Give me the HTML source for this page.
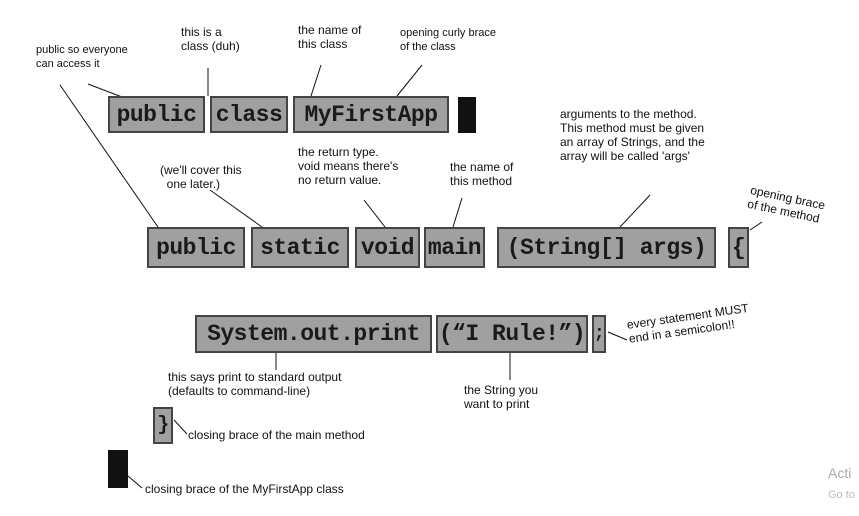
<!DOCTYPE html>
<html><head><meta charset="utf-8"><style>
body{margin:0;width:859px;height:516px;background:#fff;position:relative;overflow:hidden;font-family:"Liberation Sans",sans-serif}
.b{position:absolute;background:#a0a0a0;border:2px solid #444;box-sizing:border-box;font-family:"Liberation Mono",monospace;font-weight:bold;color:#1a1a1a;font-size:23px;letter-spacing:-0.5px;display:flex;align-items:center;justify-content:center;white-space:pre}
.k{position:absolute;background:#111}
.t{position:absolute;font-size:12px;line-height:14px;color:#111;white-space:pre}
svg{position:absolute;left:0;top:0}
</style></head><body>
<svg width="859" height="516" stroke="#111" stroke-width="1" fill="none">
<line x1="60" y1="85" x2="160" y2="230"/>
<line x1="88" y1="84" x2="122" y2="97"/>
<line x1="208" y1="68" x2="208" y2="96"/>
<line x1="321" y1="65" x2="311" y2="96"/>
<line x1="422" y1="65" x2="397" y2="96"/>
<line x1="210" y1="190" x2="262" y2="227"/>
<line x1="364" y1="200" x2="385" y2="227"/>
<line x1="462" y1="198" x2="453" y2="227"/>
<line x1="650" y1="195" x2="620" y2="227"/>
<line x1="762" y1="222" x2="750" y2="230"/>
<line x1="608" y1="332" x2="627" y2="340"/>
<line x1="276" y1="353" x2="276" y2="370"/>
<line x1="510" y1="353" x2="510" y2="380"/>
<line x1="174" y1="420" x2="187" y2="434"/>
<line x1="128" y1="476" x2="142" y2="488"/>
</svg>
<div class="t" style="left:36px;top:43px;font-size:11px">public so everyone
can access it</div>
<div class="t" style="left:181px;top:25px">this is a
class (duh)</div>
<div class="t" style="left:298px;top:23px">the name of
this class</div>
<div class="t" style="left:400px;top:26px;font-size:11px">opening curly brace
of the class</div>
<div class="b" style="left:108px;top:96px;width:97px;height:37px">public</div>
<div class="b" style="left:210px;top:96px;width:78px;height:37px">class</div>
<div class="b" style="left:293px;top:96px;width:156px;height:37px">MyFirstApp</div>
<div class="k" style="left:458px;top:97px;width:18px;height:36px"></div>
<div class="t" style="left:160px;top:163px">(we'll cover this
  one later.)</div>
<div class="t" style="left:298px;top:145px">the return type.
void means there's
no return value.</div>
<div class="t" style="left:450px;top:160px">the name of
this method</div>
<div class="t" style="left:560px;top:107px">arguments to the method.
This method must be given
an array of Strings, and the
array will be called 'args'</div>
<div class="t" style="left:752px;top:183px;transform:rotate(12deg);transform-origin:left top">opening brace
of the method</div>
<div class="b" style="left:147px;top:227px;width:98px;height:41px">public</div>
<div class="b" style="left:251px;top:227px;width:98px;height:41px">static</div>
<div class="b" style="left:355px;top:227px;width:65px;height:41px">void</div>
<div class="b" style="left:424px;top:227px;width:61px;height:41px">main</div>
<div class="b" style="left:497px;top:227px;width:219px;height:41px">(String[] args)</div>
<div class="b" style="left:728px;top:227px;width:21px;height:41px">{</div>
<div class="b" style="left:195px;top:315px;width:237px;height:38px">System.out.print</div>
<div class="b" style="left:436px;top:315px;width:152px;height:38px">(“I Rule!”)</div>
<div class="b" style="left:592px;top:315px;width:14px;height:38px;font-size:18px">;</div>
<div class="t" style="left:626px;top:318px;transform:rotate(-8deg);transform-origin:left top">every statement MUST
end in a semicolon!!</div>
<div class="t" style="left:168px;top:370px">this says print to standard output
(defaults to command-line)</div>
<div class="t" style="left:464px;top:383px">the String you
want to print</div>
<div class="b" style="left:153px;top:407px;width:20px;height:37px;font-size:20px">}</div>
<div class="t" style="left:188px;top:428px">closing brace of the main method</div>
<div class="k" style="left:108px;top:450px;width:20px;height:38px"></div>
<div class="t" style="left:145px;top:482px">closing brace of the MyFirstApp class</div>
<div class="t" style="left:828px;top:466px;color:#aaa;font-size:14px">Acti</div>
<div class="t" style="left:828px;top:488px;color:#bbb;font-size:11px">Go to</div>
</body></html>
